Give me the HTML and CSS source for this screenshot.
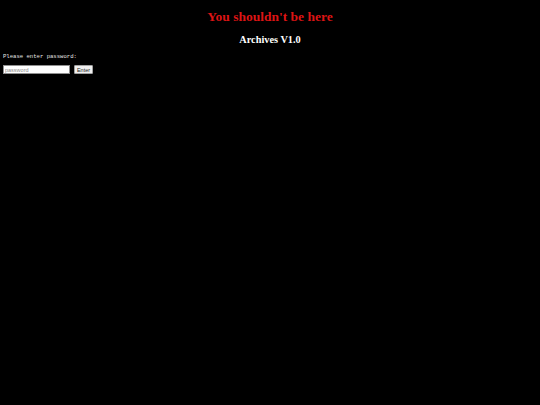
FILE: index.html
```html
<!DOCTYPE html>
<html>
<head>
<meta charset="utf-8">
<link rel="stylesheet" href="styles.css">
</head>
<body>
<h1 class="title">You shouldn't be here</h1>
<h2 class="subtitle">Archives V1.0</h2>
<p class="prompt">Please enter password:</p>
<form class="form">
<input class="pass" type="password" placeholder="password">
<button class="enter" type="button">Enter</button>
</form>
</body>
</html>
```
FILE: styles.css
```css
html, body {
  background: #000;
  margin: 0;
}
body {
  padding: 4px 3px;
  color: #fff;
  font-family: "Liberation Serif", serif;
}
.title {
  color: #dd1414;
  text-align: center;
  font-size: 13.5px;
  font-weight: bold;
  margin: 5px 0 0;
  line-height: 16px;
}
.subtitle {
  text-align: center;
  font-size: 10.3px;
  font-weight: bold;
  margin: 9px 0 0;
  line-height: 12px;
}
.prompt {
  font-family: "Liberation Mono", monospace;
  font-size: 5.6px;
  color: #e6e6e6;
  margin: 7px 0 0;
  line-height: 7px;
}
.form {
  display: flex;
  gap: 4px;
  margin-top: 5px;
  align-items: center;
}
.pass {
  width: 67px;
  height: 9px;
  box-sizing: border-box;
  padding: 0 1px;
  border: 1px solid #8f8f8f;
  background: #fff;
  font-family: "Liberation Sans", sans-serif;
  font-size: 5.5px;
}
.pass::placeholder { color: #8a8a8a; }
.enter {
  width: 19px;
  height: 9px;
  box-sizing: border-box;
  padding: 0;
  border: 1px solid #a0a0a0;
  border-radius: 1px;
  background: #efefef;
  font-family: "Liberation Sans", sans-serif;
  font-size: 5.5px;
  color: #222;
}
```
